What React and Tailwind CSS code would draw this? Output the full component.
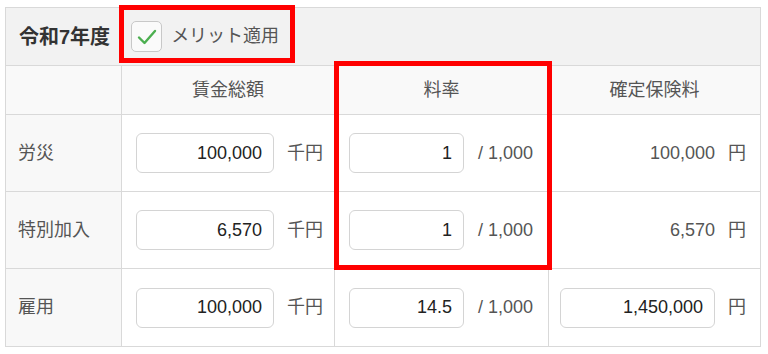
import { useState } from "react"

const rows = [
    { label: "労災", wage: "100,000", rate: "1", premium: "100,000", editable: false },
    { label: "特別加入", wage: "6,570", rate: "1", premium: "6,570", editable: false },
    { label: "雇用", wage: "100,000", rate: "14.5", premium: "1,450,000", editable: true },
]

function NumInput({ value, width }) {
    return (
        <input
            readOnly
            value={value}
            className={`${width} h-[40px] bg-white border border-[#d4d4d4] rounded-[6px] text-right pr-[11px] text-[18px] text-[#222] outline-none`}
        />
    )
}

export default function App() {
    const [merit, setMerit] = useState(true)

    return (
        <div className="relative w-[768px] h-[354px] bg-white pl-[5px] pt-[7px] text-[#555] text-[18px]" style={{ fontFamily: '"Liberation Sans", "Noto Sans CJK JP", sans-serif' }}>
            <div className="w-[756px] border-l border-t border-[#d9d9d9]">
                {/* Year row */}
                <div className="h-[58px] flex items-center pl-[13px] bg-[#f2f2f2] border-r border-b border-[#d9d9d9]">
                    <span className="font-bold text-[#333] text-[20px]">令和7年度</span>
                    <button
                        onClick={() => setMerit(!merit)}
                        className="ml-[21px] w-[31px] h-[31px] rounded-[5px] border border-[#c8c8c8] bg-[#fafafa] flex items-center justify-center cursor-pointer"
                    >
                        {merit && (
                            <svg width="22" height="22" viewBox="0 0 22 22">
                                <path d="M3 11.5 L8.5 17 L19 5" fill="none" stroke="#4caf50" strokeWidth="2.4" strokeLinecap="round" strokeLinejoin="round" />
                            </svg>
                        )}
                    </button>
                    <span className="ml-[9px] text-[#555]">メリット適用</span>
                </div>

                {/* Column headers */}
                <div className="flex h-[49px] bg-[#f9f9f9]">
                    <div className="w-[116px] border-r border-b border-[#d9d9d9]"></div>
                    <div className="w-[213px] flex items-center justify-center border-r border-b border-[#d9d9d9]">賃金総額</div>
                    <div className="w-[214px] flex items-center justify-center border-r border-b border-[#d9d9d9]">料率</div>
                    <div className="w-[212px] flex items-center justify-center border-r border-b border-[#d9d9d9]">確定保険料</div>
                </div>

                {/* Data rows */}
                {rows.map((r, i) => (
                    <div key={r.label} className={`flex ${i === 2 ? "h-[78px]" : "h-[77px]"}`}>
                        <div className="w-[116px] flex items-center pl-[12px] bg-[#f8f8f8] border-r border-b border-[#d9d9d9]">{r.label}</div>
                        <div className="w-[213px] flex items-center pl-[14px] gap-[13px] border-r border-b border-[#d9d9d9]">
                            <NumInput value={r.wage} width="w-[138px]" />
                            <span>千円</span>
                        </div>
                        <div className="w-[214px] flex items-center pl-[14px] gap-[14px] border-r border-b border-[#d9d9d9]">
                            <NumInput value={r.rate} width="w-[115px]" />
                            <span>/ 1,000</span>
                        </div>
                        <div className="w-[212px] flex items-center justify-end pr-[14px] gap-[13px] border-r border-b border-[#d9d9d9]">
                            {r.editable ? <NumInput value={r.premium} width="w-[155px]" /> : <span>{r.premium}</span>}
                            <span>円</span>
                        </div>
                    </div>
                ))}
            </div>

            {/* Highlight boxes */}
            <div className="absolute left-[119px] top-[5px] w-[176px] h-[58px] border-[5px] border-[#ff0000] pointer-events-none"></div>
            <div className="absolute left-[334px] top-[61px] w-[218px] h-[209px] border-[5px] border-[#ff0000] pointer-events-none"></div>
        </div>
    )
}
